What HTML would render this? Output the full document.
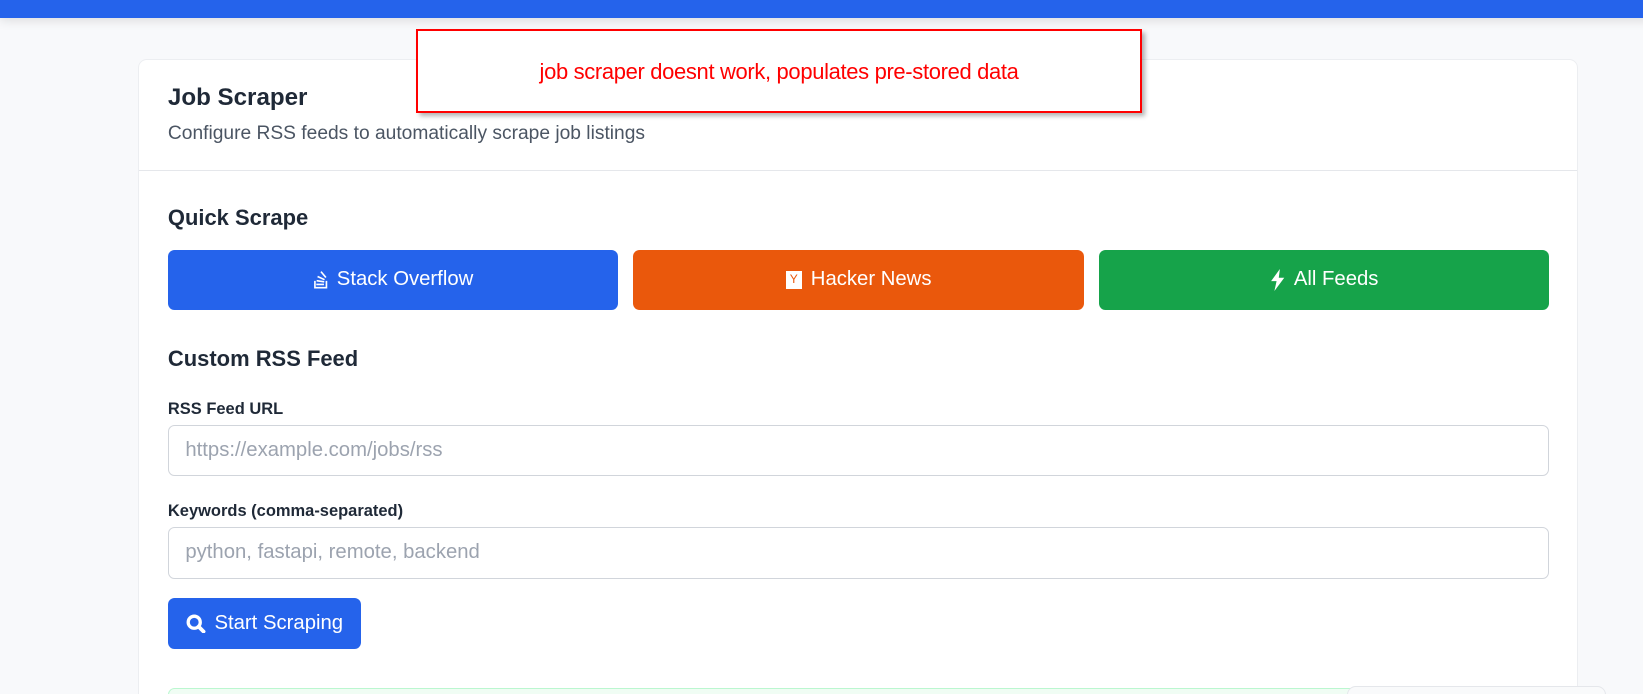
<!DOCTYPE html>
<html><head><meta charset="utf-8"><style>
*{box-sizing:border-box;margin:0;padding:0}
html,body{width:1643px;height:694px;overflow:hidden}
body{background:#f8f9fb;font-family:"Liberation Sans",sans-serif;position:relative}
.wrap{position:absolute;left:0;top:0;width:1496px;height:632px;zoom:1.098;overflow:hidden}
.top{position:absolute;left:0;top:0;width:1568px;height:16px;background:#2563eb;box-shadow:0 2px 10px rgba(0,0,0,.12)}
.card{position:absolute;left:126px;top:54px;width:1311px;height:590px;background:#fff;border:1px solid #eceef1;border-radius:8px}
.hdr{height:101px;border-bottom:1px solid #e5e7eb;padding:22px 26px}
h1{font-size:22px;font-weight:bold;color:#1f2937;margin-top:0}
.sub{font-size:17.5px;color:#4b5563;margin-top:10px}
h2{position:absolute;left:26px;font-size:20px;font-weight:bold;color:#1f2937}
.btn{position:absolute;top:173px;height:54px;width:410px;border-radius:6px;color:#fff;font-size:18.5px;display:flex;align-items:center;justify-content:center;gap:8px}
label{position:absolute;left:26px;font-size:15px;font-weight:bold;color:#1f2937}
.inp{position:absolute;left:26px;width:1258px;height:47px;border:1px solid #d1d5db;border-radius:6px;padding-left:15px;font-size:18.5px;color:#9ca3af;display:flex;align-items:center}
.go{position:absolute;left:26px;top:490px;width:176px;height:46px;background:#2563eb;border-radius:6px;color:#fff;font-size:18.5px;display:flex;align-items:center;justify-content:center;gap:8px}
.green{position:absolute;left:26px;top:572px;width:1270px;height:60px;border:1px solid #bbf7d0;background:#f0fdf4;border-radius:6px}
.toast{position:absolute;left:1227px;top:625px;width:236px;height:48px;background:#f9fafb;border:1px solid #e5e7eb;border-radius:8px}
.note{position:absolute;left:379px;top:26px;width:661px;height:77px;border:2px solid #f00;background:#fff;box-shadow:3px 3px 4px rgba(0,0,0,.3);color:#f00;font-size:20px;text-align:center;padding-top:26px;font-family:"Liberation Sans",Arial,sans-serif;letter-spacing:-.3px}
</style></head><body>
<div class="wrap">
<div class="top"></div>
<div class="card">
<div class="hdr"><h1>Job Scraper</h1><div class="sub">Configure RSS feeds to automatically scrape job listings</div></div>
<h2 style="top:132px">Quick Scrape</h2>
<div class="btn" style="left:26px;background:#2563eb"><svg width="14" height="17" viewBox="0 0 14 17" fill="#fff"><path d="M1 9v7h12V9h-1.5v5.5h-9V9z"/><rect x="3" y="11.5" width="7" height="1.5"/><rect x="3.3" y="8.5" width="7" height="1.5" transform="rotate(8 6 9)"/><rect x="4" y="5.5" width="7" height="1.5" transform="rotate(25 7 6)"/><rect x="6" y="2" width="7" height="1.5" transform="rotate(50 9 3)"/></svg>Stack Overflow</div>
<div class="btn" style="left:450px;background:#ea580c"><span style="display:inline-block;width:15px;height:16px;background:#fff;color:#ea580c;font-size:11px;text-align:center;line-height:16px">Y</span>Hacker News</div>
<div class="btn" style="left:874px;background:#16a34a"><svg width="14" height="20" viewBox="0 0 14 20" fill="#fff"><path d="M9 0L1 11h5l-2 9 9-12H8z"/></svg>All Feeds</div>
<h2 style="top:260px">Custom RSS Feed</h2>
<label style="top:309px">RSS Feed URL</label>
<div class="inp" style="top:332px">https://example.com/jobs/rss</div>
<label style="top:402px">Keywords (comma-separated)</label>
<div class="inp" style="top:425px">python, fastapi, remote, backend</div>
<div class="go"><svg width="18" height="18" viewBox="0 0 18 18"><circle cx="7.5" cy="7.5" r="5.5" fill="none" stroke="#fff" stroke-width="3"/><path d="M11.5 11.5L16 16" stroke="#fff" stroke-width="3.5" stroke-linecap="round"/></svg>Start Scraping</div>
<div class="green"></div>
</div>
<div class="toast"></div>
<div class="note">job scraper doesnt work, populates pre-stored data</div>
</div>
</body></html>
